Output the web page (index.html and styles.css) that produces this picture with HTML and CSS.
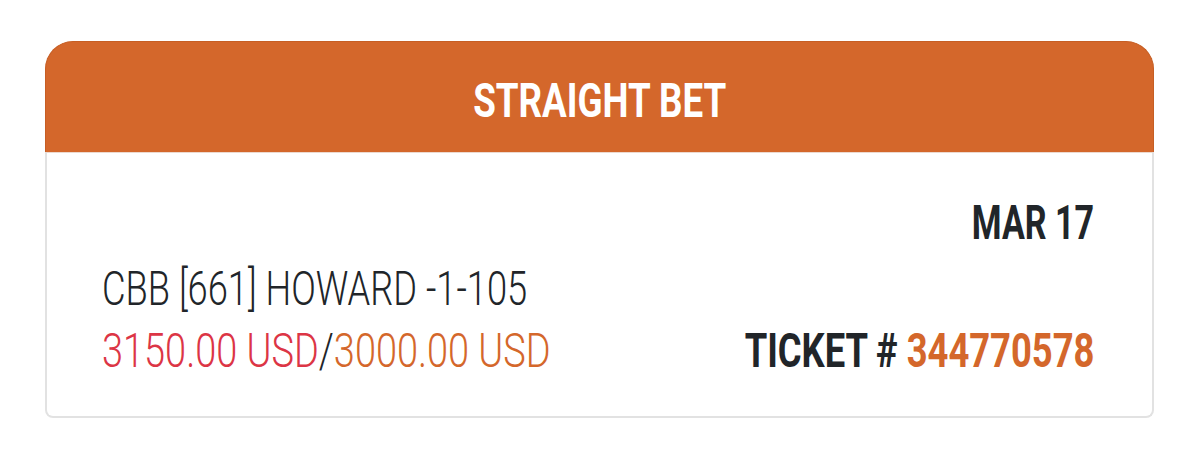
FILE: index.html
```html
<!DOCTYPE html>
<html lang="en">
<head>
<meta charset="utf-8">
<title>Straight Bet</title>
<link rel="stylesheet" href="styles.css">
</head>
<body>
  <div class="card">
    <div class="card-head">
      <span class="title sq-c">STRAIGHT BET</span>
    </div>
    <div class="card-body">
      <div class="date-row"><span class="date sq-r">MAR 17</span></div>
      <div class="bet-row">
        <div class="bet-info">
          <div class="line"><span class="sq-l game">CBB [661] HOWARD -1-105</span></div>
          <div class="line"><span class="sq-l amounts"><span class="red">3150.00 USD</span>/<span class="orange">3000.00 USD</span></span></div>
        </div>
        <div class="ticket"><span class="sq-r tk">TICKET # <span class="orange">344770578</span></span></div>
      </div>
    </div>
  </div>
</body>
</html>
```
FILE: styles.css
```css
html, body {
  margin: 0;
  background: #ffffff;
}
body {
  padding: 41px 45px;
  font-family: Roboto, "Liberation Sans", sans-serif;
  color: #212529;
}
.card {
  width: 1109px;
}
.card-head {
  box-sizing: border-box;
  height: 111px;
  padding-top: 6px;
  background: #d4672b;
  border: 1px solid #c65e24;
  border-bottom: none;
  border-radius: 28px 28px 0 0;
  display: flex;
  align-items: center;
  justify-content: center;
}
.title {
  color: #ffffff;
  font-size: 49px;
  font-weight: 700;
  white-space: nowrap;
}
.card-body {
  border: 2px solid #e2e2e2;
  border-top: 1px solid #ecd9cf;
  border-radius: 0 0 8px 8px;
  padding: 39px 58px 34px 55px;
}
.date-row {
  display: flex;
  justify-content: flex-end;
  line-height: 62px;
  margin-bottom: 4px;
}
.date {
  font-size: 49px;
  font-weight: 700;
}
.bet-row {
  display: flex;
  align-items: flex-end;
}
.bet-info {
  flex: 1 1 0;
  min-width: 0;
}
.line {
  font-size: 48px;
  font-weight: 300;
  line-height: 62px;
  white-space: nowrap;
}
.ticket {
  flex: none;
  font-size: 49px;
  font-weight: 700;
  line-height: 62px;
  white-space: nowrap;
}
.sq-l, .sq-r, .sq-c {
  display: inline-block;
}
.sq-l { transform-origin: left center; }
.sq-r { transform-origin: right center; }
.sq-c { transform-origin: center center; }
.title.sq-c { transform: scaleX(0.75); }
.date.sq-r { transform: scaleX(0.694); }
.game { transform: scaleX(0.756); }
.amounts { transform: scaleX(0.79); }
.tk { transform: scaleX(0.742); }
.red { color: #dc3545; }
.orange { color: #d4672b; }
```
